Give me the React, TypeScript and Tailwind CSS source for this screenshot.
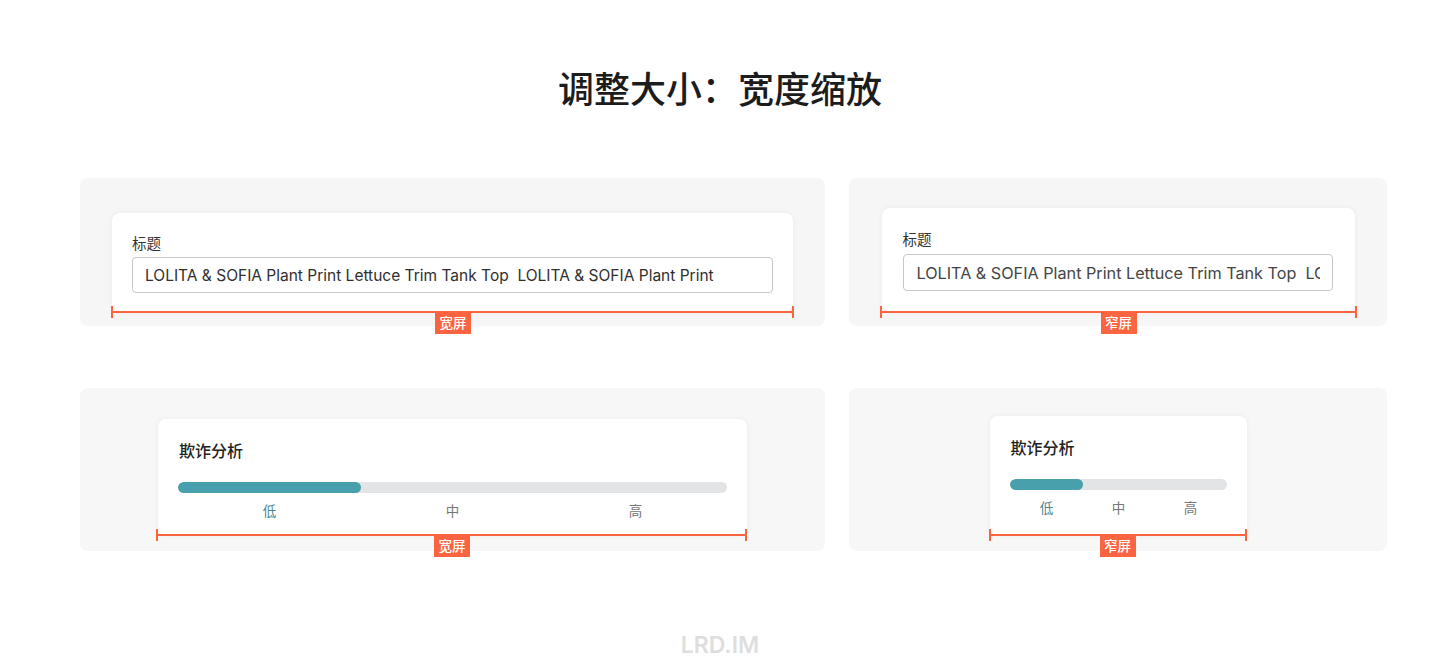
const FONT = "font-['Inter','Noto_Sans_CJK_SC',sans-serif]"
const LONG_TEXT = 'LOLITA & SOFIA Plant Print Lettuce Trim Tank Top  LOLITA & SOFIA Plant Print'

function Ruler({ label, className, badgeClass }: { label: string; className: string; badgeClass: string }) {
    return (
        <div className={`absolute h-[2px] bg-[#fb6440] ${className}`}>
            <div className="absolute left-0 top-[-5px] h-[12px] w-[2px] bg-[#fb6440]" />
            <div className="absolute right-0 top-[-5px] h-[12px] w-[2px] bg-[#fb6440]" />
            <div className={`absolute top-[2px] flex h-[21px] w-[36px] items-center justify-center bg-[#fb6440] text-[13.5px] font-medium text-white ${badgeClass}`}>
                {label}
            </div>
        </div>
    )
}

function InputCard({ label, widthClass, cardClass, labelClass, inputClass, rulerClass, badgeClass, textClass }: {
    label: string
    widthClass: string
    cardClass: string
    labelClass: string
    inputClass: string
    rulerClass: string
    badgeClass: string
    textClass: string
}) {
    return (
        <div className={`relative rounded-[8px] bg-white shadow-[0_0_6px_rgba(0,0,0,0.05)] ${widthClass} ${cardClass}`}>
            <div className={`text-[14.5px] text-[#333333] ${labelClass}`}>标题</div>
            <div className={`overflow-hidden rounded-[4px] border border-[#c6c7c9] bg-white px-[12px] ${inputClass}`}>
                <div className={`overflow-hidden whitespace-pre ${textClass}`}>{LONG_TEXT}</div>
            </div>
            <Ruler label={label} className={rulerClass} badgeClass={badgeClass} />
        </div>
    )
}

function AnalysisCard({ label, widthClass, cardClass, titleClass, fillClass, labelsClass, rulerClass, badgeClass }: {
    label: string
    widthClass: string
    cardClass: string
    titleClass: string
    fillClass: string
    labelsClass: string
    rulerClass: string
    badgeClass: string
}) {
    return (
        <div className={`relative rounded-[8px] bg-white shadow-[0_0_6px_rgba(0,0,0,0.05)] ${widthClass} ${cardClass}`}>
            <div className={`text-[16px] font-medium leading-[22px] text-[#222222] ${titleClass}`}>欺诈分析</div>
            <div className="mt-[20px] h-[11px] overflow-hidden rounded-full bg-[#e3e4e6]">
                <div className={`h-full rounded-full bg-[#48a0ac] ${fillClass}`} />
            </div>
            <div className={`mt-[9px] grid grid-cols-3 text-center text-[13.5px] leading-[18px] text-[#777777] ${labelsClass}`}>
                <span className="text-[#4b8590]">低</span>
                <span>中</span>
                <span>高</span>
            </div>
            <Ruler label={label} className={rulerClass} badgeClass={badgeClass} />
        </div>
    )
}

export default function App() {
    return (
        <div className={`h-[670px] w-[1440px] overflow-hidden bg-white ${FONT}`}>
            <h1 className="pt-[65px] text-center text-[36px] font-medium leading-[50px] text-[#1c1c1c]">{'调整大小\uFF1A宽度缩放'}</h1>
            <div className="mt-[63px] grid grid-cols-[745px_538px] grid-rows-[148px_163px] gap-x-[24px] gap-y-[62px] pl-[80px]">
                <div className="flex items-end justify-center rounded-[8px] bg-[#f6f6f6] pb-[15px]">
                    <InputCard
                        label="宽屏"
                        widthClass="w-[681px]"
                        cardClass="h-[98px] px-[20px] pt-[18px]"
                        labelClass="leading-[26px]"
                        inputClass="h-[36px] leading-[36px]"
                        rulerClass="bottom-[-2px] left-[-1px] right-[-1px]"
                        badgeClass="left-[324px]"
                        textClass="text-[15.5px] text-[#2f2f2f]"
                    />
                </div>
                <div className="flex items-end justify-center rounded-[8px] bg-[#f6f6f6] pb-[15px]">
                    <InputCard
                        label="窄屏"
                        widthClass="w-[473px]"
                        cardClass="h-[103px] pl-[21px] pr-[22px] pt-[18px]"
                        labelClass="leading-[28px]"
                        inputClass="h-[37px] leading-[36px] pl-[13px]"
                        rulerClass="bottom-[-2px] left-[-2px] right-[-2px]"
                        badgeClass="left-[221px]"
                        textClass="text-[16.2px] text-[#444444]"
                    />
                </div>
                <div className="flex items-end justify-center rounded-[8px] bg-[#f7f7f7] pb-[16px]">
                    <AnalysisCard
                        label="宽屏"
                        widthClass="w-[589px]"
                        cardClass="h-[116px] px-[20px] pt-[21px]"
                        titleClass="ml-[1px]"
                        fillClass="w-1/3"
                        labelsClass=""
                        rulerClass="bottom-[-1px] left-[-2px] right-0"
                        badgeClass="left-[278px]"
                    />
                </div>
                <div className="flex items-end justify-center rounded-[8px] bg-[#f7f7f7] pb-[16px]">
                    <AnalysisCard
                        label="窄屏"
                        widthClass="w-[257px]"
                        cardClass="h-[119px] px-[20px] pt-[21px]"
                        titleClass="ml-[1px]"
                        fillClass="w-[73px]"
                        labelsClass="ml-[1px]"
                        rulerClass="bottom-[-1px] left-[-1px] right-0"
                        badgeClass="left-[111px]"
                    />
                </div>
            </div>
            <div className="mt-[80px] text-center text-[23px] font-semibold leading-[28px] text-[#dedede]">LRD.IM</div>
        </div>
    )
}
